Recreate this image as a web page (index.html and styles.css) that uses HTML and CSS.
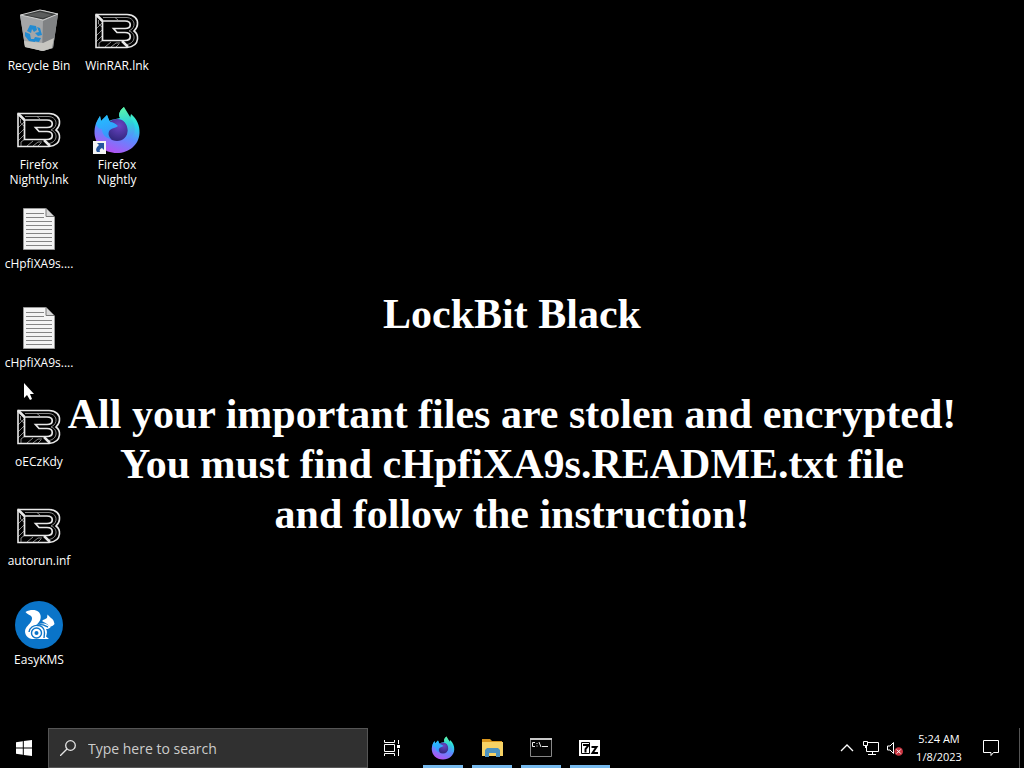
FILE: index.html
```html
<!DOCTYPE html>
<html lang="en">
<head>
<meta charset="utf-8">
<meta name="viewport" content="width=device-width, initial-scale=1">
<title>Desktop</title>
<link rel="stylesheet" href="styles.css">
</head>
<body class="screen">
<svg class="defs" aria-hidden="true">
  <defs>
    <symbol id="lb" viewBox="0 0 48 48">
      <g fill="none" stroke="#e8e8e8">
        <path stroke-width=".8" stroke="#aaa" d="M10 10.500H34C41 11 43 18 39 22L36 24C43 26 43 36 34 37.500H31M22 10.500L25 13M5.500 13V17L9 20M3 22L9 16M3 29L9 23M3 35L9 29M6 40V36L10 33M12 40L18 35M18 40L23 36H27M23 40L26 37"/>
        <path stroke-width="1.600" d="M3 7.500H34C41 7.500 45 12 44.500 17C44.500 20 43 22 41 24C43 25.500 45 28 44.500 32C44 37 40 40 34 40.500H3Z"/>
        <path fill="#000" stroke-width="1.700" d="M9.500 14H32C39 14 39 21.500 32 21.500H20.500L24 25.500H32C39 25.500 39 33.500 32 33.500H9.500Z"/>
        <path stroke-width="2.500" d="M3 7.500L9.500 14M29 34L35 40"/>
      </g>
    </symbol>
    <symbol id="doc" viewBox="0 0 48 48">
      <path fill="#f4f4f4" stroke="#999" d="M8.500 3.500H31L39.500 12V44.500H8.500Z"/>
      <path fill="#d8d8d8" stroke="#777" d="M31 3.500V11.500H39"/>
      <path stroke="#858585" d="M11 8.500H29M11 12.500H29M11 16.500H37M11 20.500H37M11 24.500H37M11 28.500H37M11 32.500H37M11 36.500H37M11 40.500H37"/>
    </symbol>
    <linearGradient id="fxBody" x1=".75" y1="0" x2=".35" y2="1">
      <stop offset="0" stop-color="#55ffb0"/><stop offset=".3" stop-color="#25d8e8"/><stop offset=".58" stop-color="#5a8cff"/><stop offset="1" stop-color="#b650f2"/>
    </linearGradient>
    <linearGradient id="fxFlame" x1=".4" y1="0" x2=".5" y2="1">
      <stop offset="0" stop-color="#5cf5a8"/><stop offset=".5" stop-color="#2fd3d8"/><stop offset="1" stop-color="#5a8cff"/>
    </linearGradient>
    <linearGradient id="fxHead" x1="0" y1="0" x2=".3" y2="1">
      <stop offset="0" stop-color="#20c4ff"/><stop offset="1" stop-color="#3a94fb"/>
    </linearGradient>
    <radialGradient id="fxGlobe" cx=".6" cy=".3" r=".8">
      <stop offset="0" stop-color="#6a45c4"/><stop offset="1" stop-color="#2a2375"/>
    </radialGradient>
    <symbol id="firefox" viewBox="0 0 48 48">
      <path fill="url(#fxBody)" d="M31 1C31 5 34 8 37 12L38 8C44 13 47 20 46.500 27C46 39 36 47 24 47C11 47 1 38 1.500 25C2 17 5 13 7 10L8 15L14 9L16 15C20 13 24 13 27 12C25 8 27 4 31 1Z"/>
      <circle cx="24" cy="24" r="11" fill="url(#fxGlobe)"/>
      <path fill="url(#fxHead)" d="M3 18L7 10L8 15L14 9L17 16C20 16 23 18 25 20C23 22 19 22 17 24C15 26 15 30 18 33C12 32 9 28 9 23C6 23 4 21 3 18Z"/>
      <path fill="url(#fxFlame)" d="M27 12C35 16 37 27 32 33C41 33 45 23 39 14L31 1C27 4 25 8 27 12Z"/>
    </symbol>
  </defs>
</svg>

<main class="desktop">
  <section class="notice">
    <h1 class="notice-title">LockBit Black</h1>
    <p class="notice-text">All your important files are stolen and encrypted!<br>You must find cHpfiXA9s.README.txt file<br>and follow the instruction!</p>
  </section>

  <nav class="icons" aria-label="Desktop icons">
    <a class="icon" href="#">
      <svg class="icon-art" viewBox="0 0 48 48">
        <path fill="#a9abab" d="M5 8L28 3L43 7L38 41L28 44L10 40Z"/>
        <path fill="#a4a6a8" d="M5 8L28 14L27 44L10 39Z"/>
        <path fill="#808284" d="M28 14L43 7L38 41L27 44Z"/>
        <path fill="#c6c5c0" d="M9 34L28 36L39 31L37 41L28 44L10 40Z"/>
        <path fill="#3a3c3c" stroke="#d0d1d1" d="M5.500 8L25 3L43 7L28 13Z"/>
        <path fill="#5b5d5d" d="M11 8L25 5L37 8L28 11Z"/>
        <g fill="#218bd2">
          <path d="M12 24L15 18L21 19L22 23L19 25L17 22L16 26Z"/>
          <path d="M22 20L25 21L27 28L23 29L20 26L24 25Z"/>
          <path d="M10 25L15 27L16 32L20 32V35L14 34L10 29Z"/>
          <path d="M20 30L26 31L24 35L18 34Z"/>
        </g>
      </svg>
      <span class="icon-label">Recycle Bin</span>
    </a>
    <a class="icon" href="#"><svg class="icon-art"><use href="#lb"/></svg><span class="icon-label">Firefox<br>Nightly.lnk</span></a>
    <a class="icon" href="#"><svg class="icon-art"><use href="#doc"/></svg><span class="icon-label">cHpfiXA9s....</span></a>
    <a class="icon" href="#"><svg class="icon-art"><use href="#doc"/></svg><span class="icon-label">cHpfiXA9s....</span></a>
    <a class="icon" href="#"><svg class="icon-art"><use href="#lb"/></svg><span class="icon-label">oECzKdy</span></a>
    <a class="icon" href="#"><svg class="icon-art"><use href="#lb"/></svg><span class="icon-label">autorun.inf</span></a>
    <a class="icon" href="#">
      <svg class="icon-art" viewBox="0 0 48 48">
        <circle cx="24" cy="24" r="24" fill="#0a74c8"/>
        <path fill="#fff" d="M10.500 11C14 9 18 8.500 21 9.500C26 11 27 17 24 21C22 24 19 25 18 27C21 23.500 25 22 29 22.500C32 23 34 25 36 25.500C35 27.500 33 28 31 28C32.500 30 32 33 31 35.500L34 38H17C11 37 8.500 31 11 27C13 24 17 21 17 17.500C17 14 13.500 14.500 10.500 11Z"/>
        <path fill="#fff" d="M27 20C29 18 31 18 32 17L32.500 13.500L36 17C38 18 39 20 39.500 23C38 25 36 26 34 25C32 22 29 21.500 27 20Z"/>
        <g fill="none" stroke="#0a74c8" stroke-width="1.400"><circle cx="21.500" cy="32" r="5"/><path d="M14 31C15 22 30 22 29.500 32L29 37M22 24.500C27 22 30 25 33 26"/></g>
        <circle cx="21.500" cy="32" r="2" fill="#0a74c8"/>
      </svg>
      <span class="icon-label">EasyKMS</span>
    </a>
    <a class="icon" href="#"><svg class="icon-art"><use href="#lb"/></svg><span class="icon-label">WinRAR.lnk</span></a>
    <a class="icon" href="#">
      <span class="icon-art shortcut">
        <svg class="fill"><use href="#firefox"/></svg>
        <svg class="shortcut-mark" viewBox="0 0 13 13"><path fill="#f4f4f4" d="M0 0H13V13H0Z"/><path fill="#24549d" d="M4 2H11V9L9 7C7 8 6 9 7 11H4C2 8 4 6 6 4Z"/></svg>
      </span>
      <span class="icon-label">Firefox<br>Nightly</span>
    </a>
  </nav>

  <svg class="pointer" viewBox="0 0 12 19" aria-hidden="true"><path fill="#fff" d="M1 1V16L4 13L7 18L9 17L7 12H11Z"/></svg>
</main>

<footer class="taskbar">
  <button class="bar-button" aria-label="Start">
    <svg class="glyph" viewBox="0 0 16 16"><path fill="#fff" d="M0 2.200L6.800 1.200V7.500H0ZM7.800 1L16 0V7.500H7.800ZM0 8.500H6.800V14.800L0 13.800ZM7.800 8.500H16V16L7.800 15Z"/></svg>
  </button>
  <label class="search">
    <svg class="glyph" viewBox="0 0 16 16" fill="none" stroke="#e5e5e5" stroke-width="1.300"><circle cx="10.500" cy="5.500" r="4.800"/><path d="M7 9L0 16"/></svg>
    <input class="search-input" type="text" placeholder="Type here to search" aria-label="Type here to search">
  </label>
  <button class="bar-button" aria-label="Task View">
    <svg class="glyph" viewBox="0 0 16 16" fill="none" stroke="#fff"><path d="M.5 0V2.500H10.500V0M.5 16V13.500H10.500V16M.5 4.500H10.500V11.500H.5ZM14.500 0V4M14.500 9V16"/><path fill="#fff" stroke="none" d="M13 5H16V8H13Z"/></svg>
  </button>
  <div class="apps">
    <button class="app" aria-label="Firefox Nightly"><svg class="app-art"><use href="#firefox"/></svg></button>
    <button class="app" aria-label="File Explorer">
      <svg class="app-art" viewBox="0 0 24 24"><path fill="#d9961d" d="M2 3H10L12 5H22V10H2Z"/><path fill="#f7d264" d="M2 6H23V20H2Z"/><path fill="#4c92bf" d="M7 12H18L20 14V21H16V17H9V21H5V14Z"/></svg>
    </button>
    <button class="app" aria-label="Command Prompt">
      <svg class="app-art" viewBox="0 0 24 24"><path fill="#050505" stroke="#888" d="M1.500 2.500H22.500V20.500H1.500Z"/><path fill="#c8c8c8" d="M1 2H23V4H1Z"/><path fill="none" stroke="#eee" d="M6 6.500H3.500V10.500H6M8 7V8M8 9.500V10.500M10 6L12 11M13 10.500H19"/></svg>
    </button>
    <button class="app" aria-label="7-Zip">
      <svg class="app-art" viewBox="0 0 24 24"><path fill="#fff" d="M1 4H22V20H1Z"/><path fill="none" stroke="#000" d="M3.500 6.500H11.500V17.500H3.500Z"/><path fill="none" stroke="#000" stroke-width="2" d="M5 9H10V10L7.500 13V16.500M13.500 11H18.500L14.500 17H20"/></svg>
    </button>
  </div>
  <div class="tray">
    <button class="tray-button" aria-label="Show hidden icons"><svg class="glyph" viewBox="0 0 16 16" fill="none" stroke="#fff" stroke-width="1.300"><path d="M2 11L8 5L14 11"/></svg></button>
    <button class="tray-button" aria-label="Network"><svg class="glyph" viewBox="0 0 16 16" fill="none" stroke="#fff"><path d="M5 2.500H15.500V11.500H3.500V6M9.500 12V14.500M5 14.500H13"/><path d="M.5 1.500H4.500V5.500H.5ZM2.500 5.500V8"/></svg></button>
    <button class="tray-button" aria-label="Volume"><svg class="glyph" viewBox="0 0 16 16"><path fill="none" stroke="#fff" d="M.5 6H3L6.500 2.500V13.500L3 10H.5Z"/><circle cx="11.700" cy="11.500" r="4.300" fill="#c83440"/><path stroke="#fff" d="M9.700 9.500L13.700 13.500M13.700 9.500L9.700 13.500"/></svg></button>
    <button class="clock"><time datetime="2023-01-08T05:24">5:24 AM<br>1/8/2023</time></button>
    <button class="bar-button" aria-label="Notifications"><svg class="glyph" viewBox="0 0 16 16" fill="none" stroke="#fff"><path d="M.5 .5H15.500V12.500H10.500L8 15.500V12.500H.5Z"/></svg></button>
    <button class="show-desktop" aria-label="Show desktop"></button>
  </div>
</footer>
</body>
</html>
```
FILE: styles.css
```css
* {
  box-sizing: border-box;
}

.screen {
  margin: 0;
  min-height: 100vh;
  display: grid;
  grid-template-rows: 1fr 40px;
  background: #000;
  color: #fff;
  font-family: "Open Sans", "Noto Sans", sans-serif;
  overflow: hidden;
}

.defs {
  position: absolute;
  width: 0;
  height: 0;
}

.desktop {
  position: relative;
  display: grid;
}

.notice,
.icons {
  grid-area: 1 / 1;
}

.notice {
  padding-top: 100px;
  align-self: center;
  text-align: center;
  font-family: "Liberation Serif", serif;
  font-size: 42px;
  font-weight: 700;
  line-height: 50px;
  font-variant-ligatures: none;
}

.notice-title {
  margin: 0 0 50px;
  font-size: inherit;
}

.notice-text {
  margin: 0;
}

.icons {
  display: grid;
  grid-auto-flow: column;
  grid-template-rows: repeat(7, 99px);
  grid-auto-columns: 78px;
  justify-content: start;
}

.icon {
  display: flex;
  flex-direction: column;
  align-items: center;
  gap: 3px;
  padding-top: 7px;
  color: inherit;
  text-decoration: none;
}

.icon-art {
  width: 48px;
  height: 48px;
}

.icon-label {
  font-size: 12px;
  line-height: 15px;
  text-align: center;
}

.shortcut {
  position: relative;
}

.fill {
  display: block;
  width: 100%;
  height: 100%;
}

.shortcut-mark {
  position: absolute;
  left: 0;
  bottom: 0;
  width: 13px;
  height: 13px;
}

.pointer {
  position: absolute;
  left: 23px;
  top: 382px;
  width: 12px;
  height: 19px;
}

.taskbar {
  display: flex;
}

.bar-button,
.app,
.tray-button,
.clock,
.show-desktop {
  display: flex;
  align-items: center;
  justify-content: center;
  padding: 0;
  border: 0;
  background: none;
  color: inherit;
  font: inherit;
}

.bar-button {
  width: 48px;
}

.glyph {
  flex: none;
  width: 16px;
  height: 16px;
}

.search {
  flex: 0 1 320px;
  display: flex;
  align-items: center;
  gap: 12px;
  padding: 0 11px;
  border: 1px solid #555;
  background: #303030;
}

.search-input {
  flex: 1;
  min-width: 0;
  padding: 0;
  border: 0;
  outline: 0;
  background: none;
  color: #fff;
  font: inherit;
  font-size: 14px;
}

.search-input::placeholder {
  color: #ccc;
  opacity: 1;
}

.apps {
  display: flex;
  gap: 9px;
  padding-left: 7px;
}

.app {
  width: 40px;
  border-bottom: 3px solid #76b9ed;
  padding-top: 3px;
}

.app-art {
  width: 24px;
  height: 24px;
}

.tray {
  display: flex;
  margin-left: auto;
}

.tray-button {
  width: 24px;
}

.clock {
  width: 56px;
  margin-left: 4px;
  font-size: 11px;
  line-height: 18px;
}

.show-desktop {
  width: 5px;
  margin-left: 4px;
  border-left: 1px solid #555;
}
```
